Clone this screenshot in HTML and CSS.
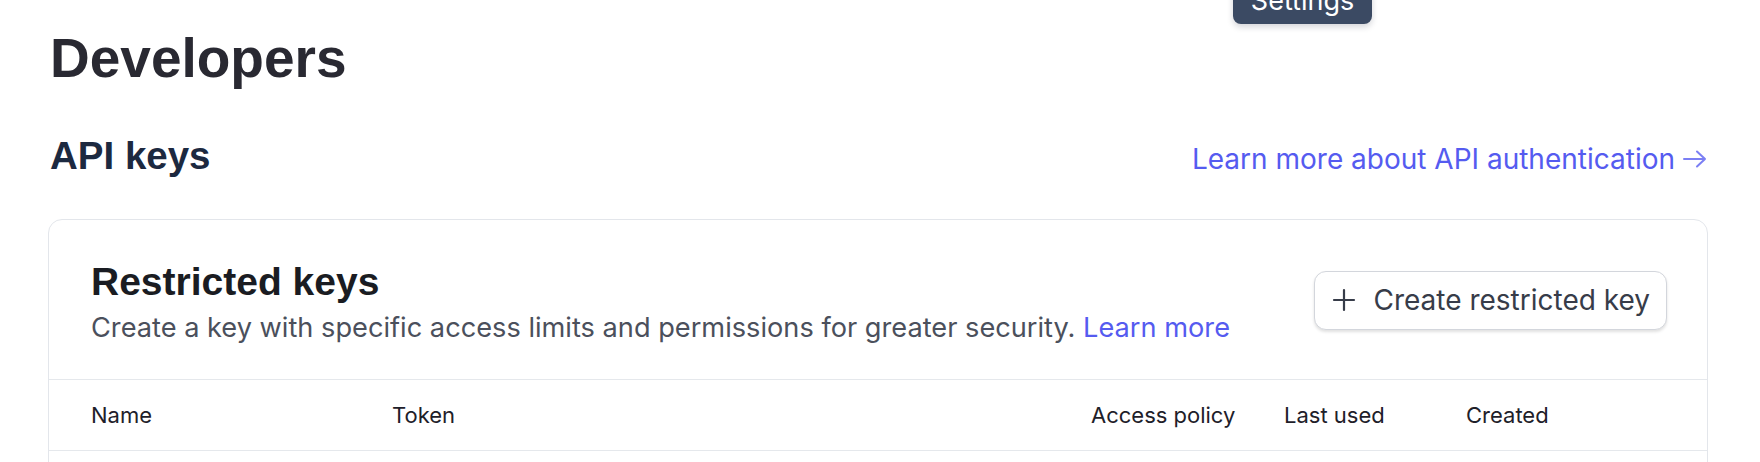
FILE: index.html
```html
<!DOCTYPE html>
<html lang="en">
<head>
<meta charset="utf-8">
<title>Developers</title>
<link rel="stylesheet" href="styles.css">
</head>
<body>
<div class="tooltip">Settings</div>
<main class="page">
  <h1 class="page-title">Developers</h1>
  <div class="section-head">
    <h2 class="section-title">API keys</h2>
    <a class="doc-link" href="#">Learn more about API authentication<svg class="arrow" viewBox="0 0 26 20" width="26" height="20" aria-hidden="true"><path d="M2 10h21M15 2.5l8 7.5-8 7.5" fill="none" stroke="currentColor" stroke-width="2" stroke-linecap="round" stroke-linejoin="round"/></svg></a>
  </div>
  <section class="card">
    <div class="card-head">
      <div class="card-intro">
        <h3 class="card-title">Restricted keys</h3>
        <p class="card-desc">Create a key with specific access limits and permissions for greater security. <a class="inline-link" href="#">Learn more</a></p>
      </div>
      <button class="btn" type="button"><svg class="plus" viewBox="0 0 24 24" width="24" height="24" aria-hidden="true"><path d="M12 2v20M2 12h20" fill="none" stroke="currentColor" stroke-width="2.2" stroke-linecap="round"/></svg><span>Create restricted key</span></button>
    </div>
    <div class="table">
      <div class="row head-row">
        <div class="cell">Name</div>
        <div class="cell">Token</div>
        <div class="cell">Access policy</div>
        <div class="cell">Last used</div>
        <div class="cell">Created</div>
      </div>
      <div class="row body-row"></div>
    </div>
  </section>
</main>
</body>
</html>
```
FILE: styles.css
```css
* { box-sizing: border-box; }
html, body { margin: 0; background: #ffffff; }
body {
  font-family: Inter, "Noto Sans", "Liberation Sans", sans-serif;
  color: #1f2330;
  position: relative;
  overflow: hidden;
  height: 462px;
}
.tooltip {
  position: absolute;
  left: 1233px;
  top: -20px;
  width: 139px;
  height: 44px;
  background: #3b4a63;
  color: #ffffff;
  border-radius: 8px;
  font-size: 27px;
  line-height: 27px;
  padding-top: 7px;
  text-align: center;
  box-shadow: 0 3px 6px rgba(15, 23, 42, 0.18);
}
.page {
  padding: 26px 52px 0 48px;
}
.page-title {
  margin: 0;
  font-family: "Liberation Sans", Arial, sans-serif;
  font-weight: 700;
  font-size: 55px;
  line-height: 64px;
  color: #292932;
  padding-left: 2px;
}
.section-head {
  display: flex;
  align-items: baseline;
  justify-content: space-between;
  margin-top: 43px;
}
.section-title {
  margin: 0;
  font-family: "Liberation Sans", Arial, sans-serif;
  font-weight: 700;
  font-size: 38.5px;
  line-height: 46px;
  color: #1c2940;
  padding-left: 2px;
}
.doc-link {
  color: #555bf0;
  text-decoration: none;
  font-size: 28px;
  display: inline-flex;
  align-items: center;
  gap: 7px;
}
.arrow { color: #7b7ff4; flex: none; }
.card {
  margin-top: 40px;
  border: 1px solid #e3e6eb;
  border-radius: 14px;
  background: #ffffff;
}
.card-head {
  display: flex;
  align-items: center;
  justify-content: space-between;
  padding: 38px 40px 34px 42px;
  border-bottom: 1px solid #e5e8ec;
}
.card-title {
  margin: 0;
  font-family: "Liberation Sans", Arial, sans-serif;
  font-weight: 700;
  font-size: 39px;
  line-height: 47px;
  color: #1a1c22;
}
.card-desc {
  margin: 6px 0 0;
  font-size: 27.2px;
  line-height: 34px;
  color: #4b505c;
}
.inline-link { color: #555bf0; text-decoration: none; }
.btn {
  display: inline-flex;
  align-items: center;
  gap: 17px;
  height: 59px;
  margin-bottom: 3px;
  padding: 0 16px 0 17px;
  border: 1px solid #d3d6dc;
  border-radius: 12px;
  background: #ffffff;
  box-shadow: 0 2px 3px rgba(0, 0, 0, 0.12);
  font-family: inherit;
  font-size: 28px;
  color: #373c49;
}
.plus { color: #373c49; flex: none; }
.row {
  display: grid;
  grid-template-columns: 301px 699px 193px 182px 1fr;
  padding-left: 42px;
}
.head-row {
  height: 71px;
  align-items: center;
  font-size: 22px;
  color: #1e2029;
  border-bottom: 1px solid #e5e8ec;
}
.body-row { height: 60px; }
```
